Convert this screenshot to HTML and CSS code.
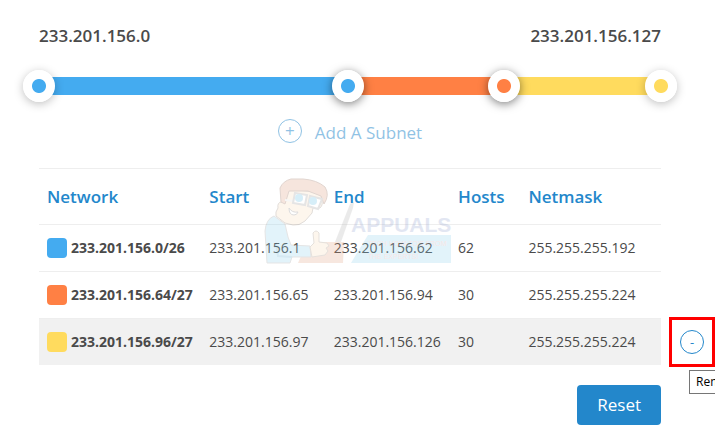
FILE: index.html
```
<!DOCTYPE html>
<html lang="en">

<head>
  <meta charset="UTF-8">
  <meta name="viewport" content="width=device-width, initial-scale=1.0">
  <title>Subnet Calculator</title>
  <link rel="stylesheet" href="styles.css">
</head>

<body>
  <main class="calculator">
    <div class="range-labels">
      <span>233.201.156.0</span>
      <span>233.201.156.127</span>
    </div>

    <div class="slider">
      <div class="track">
        <div class="segment blue" style="flex-grow: 63"></div>
        <div class="segment orange" style="flex-grow: 32"></div>
        <div class="segment yellow" style="flex-grow: 32"></div>
      </div>
      <input class="handle blue fixed" type="range" min="0" max="127" value="0" aria-label="Range start">
      <input class="handle blue" type="range" min="0" max="127" value="63" aria-label="End of first subnet">
      <input class="handle orange" type="range" min="0" max="127" value="95" aria-label="End of second subnet">
      <input class="handle yellow fixed" type="range" min="0" max="127" value="127" aria-label="Range end">
    </div>

    <button class="add" type="button">
      <span class="circle">+</span>
      <span class="add-text">Add A Subnet</span>
    </button>

    <div class="table-wrap">
      <table class="subnets">
        <thead>
          <tr>
            <th class="col-network">Network</th>
            <th class="col-address">Start</th>
            <th class="col-address">End</th>
            <th class="col-hosts">Hosts</th>
            <th>Netmask</th>
          </tr>
        </thead>
        <tbody>
          <tr>
            <td><div class="network"><span class="swatch blue"></span>233.201.156.0/26</div></td>
            <td>233.201.156.1</td>
            <td>233.201.156.62</td>
            <td>62</td>
            <td>255.255.255.192</td>
          </tr>
          <tr>
            <td><div class="network"><span class="swatch orange"></span>233.201.156.64/27</div></td>
            <td>233.201.156.65</td>
            <td>233.201.156.94</td>
            <td>30</td>
            <td>255.255.255.224</td>
          </tr>
          <tr class="active">
            <td><div class="network"><span class="swatch yellow"></span>233.201.156.96/27</div></td>
            <td>233.201.156.97</td>
            <td>233.201.156.126</td>
            <td>30</td>
            <td class="last">
              255.255.255.224
              <div class="remove-box">
                <button class="circle remove" type="button" aria-label="Remove">-</button>
                <span class="tooltip" role="tooltip">Remove</span>
              </div>
            </td>
          </tr>
        </tbody>
      </table>

      <svg class="watermark" viewBox="0 0 190 90" aria-hidden="true">
        <!-- laptop -->
        <path d="M71 65 L86 27 L90 25 L89 31 L77 65 Z" fill="#b0b0b0"/>
        <path d="M56 65 L80 65 L79 86 L34 86 L38 77 L56 77 Z" fill="#e0a184"/>
        <!-- body -->
        <path d="M3 86 L1 54 Q2 42 10 39 L21 47 L24 60 L27 68 L46 69 L47 80 L28 80 L26 86 Z" fill="#8fd0ec" stroke="#999" stroke-width="1"/>
        <path d="M12 66 L14 79 L28 80" fill="none" stroke="#5ba9cc" stroke-width="2"/>
        <path d="M46 70 L50 66 L49 56 Q52 52 55 56 L55 65 L63 66 L65 69 L62 71 L64 74 L61 78 L48 80 Z" fill="#f9dcbc" stroke="#9b8b78" stroke-width="1"/>
        <!-- head -->
        <path d="M18 14 L18 25 Q13 25 14 31 Q11 35 12 39 L21 46 L29 48 Q35 49 41 44 L48 36 L49 31 L56 31 Q60 27 57 22 L58 16 L26 12 Z" fill="#f9dcbc" stroke="#8a7b6c" stroke-width="1"/>
        <path d="M17 25 L16 11 Q19 4 27 2 L39 2 Q53 3 61 10 Q66 18 60 27 L57 19 L44 14 L25 14 L21 27 Z" fill="#dc9c7c" stroke="#8a5a44" stroke-width="1"/>
        <path d="M21 23 L29 24" stroke="#ddd" stroke-width="2"/>
        <path d="M31 16 L43 18 L41 28 L29 26 Z M46 19 L58 22 L54 32 L44 29 Z" fill="#fff" stroke="#999" stroke-width="2"/>
        <circle cx="35" cy="21" r="4" fill="#61bde4"/>
        <circle cx="49" cy="24" r="4" fill="#61bde4"/>
        <path d="M25 31 Q25 38 30 38 Q33 38 34 35 Q28 36 25 31 Z" fill="#fff" stroke="#777" stroke-width="1"/>
        <!-- name and tagline -->
        <path d="M104 58 L187 58 L187 86 L87 86 Z" fill="#8fd0ec"/>
        <text class="mark-name" x="87" y="55">APPUALS</text>
        <text class="mark-line" x="104" y="69">TECH HOW-TO'S FROM</text>
        <text class="mark-line" x="104" y="82">THE EXPERTS!</text>
      </svg>
    </div>

    <div class="actions">
      <button class="reset" type="button">Reset</button>
    </div>
  </main>
</body>

</html>
```
FILE: styles.css
```
* {
  box-sizing: border-box;
}

body {
  margin: 0;
  overflow-x: hidden;
  background: #fff;
  color: #4a4a4a;
  font: 14px/20px "Open Sans", "Noto Sans", sans-serif;
}

button {
  font: inherit;
  cursor: pointer;
}

.calculator {
  padding: 24px 54px 15px 39px;
}

.range-labels {
  display: flex;
  justify-content: space-between;
  font-size: 17px;
  line-height: 24px;
  font-weight: 600;
}

.blue {
  --color: #44abf0;
}

.orange {
  --color: #ff8044;
}

.yellow {
  --color: #ffdb5e;
}

/* slider */
.slider {
  display: grid;
  align-items: center;
  height: 32px;
  margin: 22px -16px 0;
}

.slider > * {
  grid-area: 1 / 1;
}

.track {
  display: flex;
  height: 18px;
  margin: 0 16px;
}

.segment {
  flex-basis: 0;
  background: var(--color);
}

.handle {
  appearance: none;
  width: 100%;
  height: 32px;
  margin: 0;
  background: none;
  pointer-events: none;
}

.handle::-webkit-slider-thumb {
  appearance: none;
  width: 32px;
  height: 32px;
  border-radius: 50%;
  background: radial-gradient(circle, var(--color) 6.5px, #fff 7.5px);
  box-shadow: 0 2px 10px rgba(0, 0, 0, .5);
  pointer-events: auto;
  cursor: pointer;
}

.handle.fixed::-webkit-slider-thumb {
  box-shadow: 0 2px 10px rgba(0, 0, 0, .25);
}

/* add button */
.circle {
  display: flex;
  align-items: center;
  justify-content: center;
  width: 24px;
  height: 24px;
  border: 1px solid #2387cb;
  border-radius: 50%;
}

.add {
  display: flex;
  gap: 13px;
  margin: 17px auto 0;
  padding: 0;
  border: 0;
  background: none;
  color: #2387cb;
  font-size: 17px;
  line-height: 24px;
  opacity: .5;
}

.add-text {
  padding-top: 2px;
}

/* table */
.table-wrap {
  position: relative;
  margin-top: 23px;
}

.subnets {
  width: 100%;
  table-layout: fixed;
  border-collapse: collapse;
}

.subnets th,
.subnets td {
  padding: 13px 8px;
  border-top: 1px solid #eee;
  text-align: left;
  white-space: nowrap;
}

.subnets th {
  padding: 16px 8px 15px;
  color: #2387cb;
  font-size: 17px;
  line-height: 24px;
  font-weight: 600;
}

.col-network {
  width: 26.1%;
}

.col-address {
  width: 20%;
}

.col-hosts {
  width: 11.3%;
}

.network {
  display: flex;
  align-items: center;
  gap: 4px;
  font-weight: 700;
}

.swatch {
  width: 20px;
  height: 20px;
  border-radius: 4px;
  background: var(--color);
}

.active {
  background: #f1f1f1;
}

.last {
  position: relative;
}

.remove-box {
  position: absolute;
  top: -2px;
  left: calc(100% + 8px);
  display: flex;
  align-items: center;
  justify-content: center;
  width: 46px;
  height: 50px;
  border: 3px solid #f00;
}

.remove {
  padding: 0;
  background: none;
  color: #2387cb;
  font-size: 13px;
}

.tooltip {
  position: absolute;
  top: 50px;
  left: 17px;
  padding: 1px 6px;
  border: 1px solid #767676;
  background: #fff;
  color: #000;
  font-size: 12px;
}

.watermark {
  position: absolute;
  top: 9px;
  left: 50%;
  width: 190px;
  height: 90px;
  margin-left: -86px;
  opacity: .25;
  pointer-events: none;
}

.mark-name {
  fill: #8e9fce;
  font: 700 21px "Liberation Sans", sans-serif;
}

.mark-line {
  fill: #e6a09a;
  font: 7px "Liberation Sans", sans-serif;
}

/* actions */
.actions {
  display: flex;
  justify-content: flex-end;
  margin-top: 20px;
}

.reset {
  padding: 8px 20px;
  border: 0;
  border-radius: 4px;
  background: #2387cb;
  color: #fff;
  font-size: 17px;
  line-height: 24px;
}
```
